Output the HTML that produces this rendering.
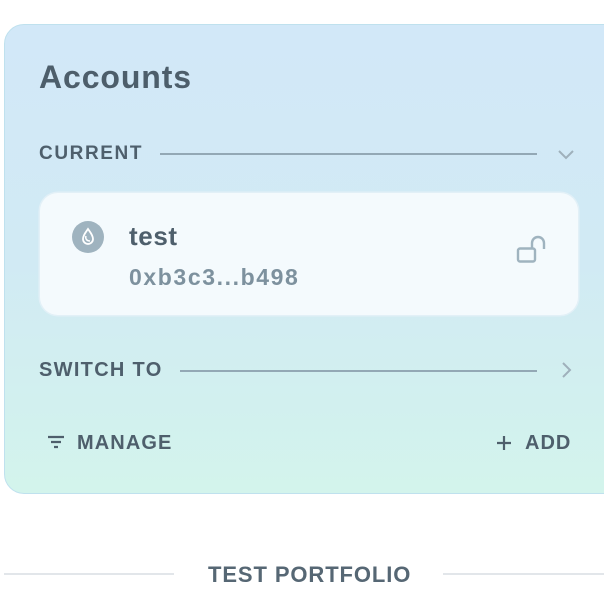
<!DOCTYPE html>
<html><head><style>
html,body{margin:0;padding:0;background:#fff;width:604px;height:612px;overflow:hidden;font-family:"Liberation Sans",sans-serif;}
.card{position:absolute;left:4px;top:24px;width:640px;height:470px;border:1.5px solid #bfe1ee;border-radius:20px;background:linear-gradient(180deg,#d2e8f8 0%,#d1eaf4 50%,#d3f4ec 100%);box-sizing:border-box;}
.t{position:absolute;color:#4e5f6c;white-space:nowrap;font-weight:bold;}
.line{position:absolute;height:1.5px;background:#93a8b5;}
.inner{position:absolute;left:40px;top:193px;width:538px;height:122px;background:#f4fafd;border-radius:18px;box-shadow:0 0 0 1.5px #e2f0f7;}
</style></head><body>
<div class="card"></div>
<div class="t" style="left:39px;top:59px;font-size:32px;letter-spacing:0.9px;color:#4d5e6b;">Accounts</div>
<div class="t" style="left:39px;top:143px;font-size:19px;letter-spacing:1.6px;">CURRENT</div>
<div class="line" style="left:160px;width:377px;top:153px;"></div>
<svg style="position:absolute;left:557px;top:148px" width="18" height="12"><path d="M2 3 L9 10 L16 3" fill="none" stroke="#9fb0bb" stroke-width="2"/></svg>
<div class="inner"></div>
<svg style="position:absolute;left:72px;top:221px" width="32" height="32"><circle cx="16" cy="16" r="16" fill="#9fb3bf"/><path d="M16 8 C18 11 21 14 21 18 A5 5 0 0 1 11 18 C11 14 14 11 16 8 Z" fill="none" stroke="#fff" stroke-width="1.8"/><path d="M14 15 C13 18 15 20 18 20" fill="none" stroke="#fff" stroke-width="1.5"/></svg>
<div class="t" style="left:129px;top:221px;font-size:26px;letter-spacing:0.6px;color:#4e5f6c;">test</div>
<div class="t" style="left:129px;top:264px;font-size:23px;letter-spacing:1.6px;color:#7d919e;">0xb3c3...b498</div>
<svg style="position:absolute;left:512px;top:232px" width="40" height="36"><rect x="6" y="16.5" width="17" height="13" rx="2" fill="none" stroke="#9fb3bf" stroke-width="2.4"/><path d="M20 16.5 V11 A6 6 0 0 1 32 11 V17" fill="none" stroke="#9fb3bf" stroke-width="2.4"/></svg>
<div class="t" style="left:39px;top:359px;font-size:20px;letter-spacing:1.3px;">SWITCH TO</div>
<div class="line" style="left:180px;width:357px;top:370px;"></div>
<svg style="position:absolute;left:560px;top:361px" width="14" height="18"><path d="M3 2 L10 9 L3 16" fill="none" stroke="#9fb0bb" stroke-width="2"/></svg>
<svg style="position:absolute;left:46px;top:434px" width="20" height="16"><path d="M2 3H18M5 8H15M8 13H12" stroke="#4e5f6c" stroke-width="2.2"/></svg>
<div class="t" style="left:77px;top:432px;font-size:20px;letter-spacing:1.1px;">MANAGE</div>
<svg style="position:absolute;left:495px;top:434px" width="18" height="18"><path d="M9 2V16M2 9H16" stroke="#4e5f6c" stroke-width="2.2"/></svg>
<div class="t" style="left:525px;top:432px;font-size:20px;letter-spacing:1px;">ADD</div>
<div style="position:absolute;left:4px;width:170px;top:573px;height:1.5px;background:#e2e6ea;"></div>
<div style="position:absolute;left:443px;width:161px;top:573px;height:1.5px;background:#e2e6ea;"></div>
<div class="t" style="left:208px;top:562px;font-size:22px;letter-spacing:0.9px;color:#566774;">TEST PORTFOLIO</div>
</body></html>
